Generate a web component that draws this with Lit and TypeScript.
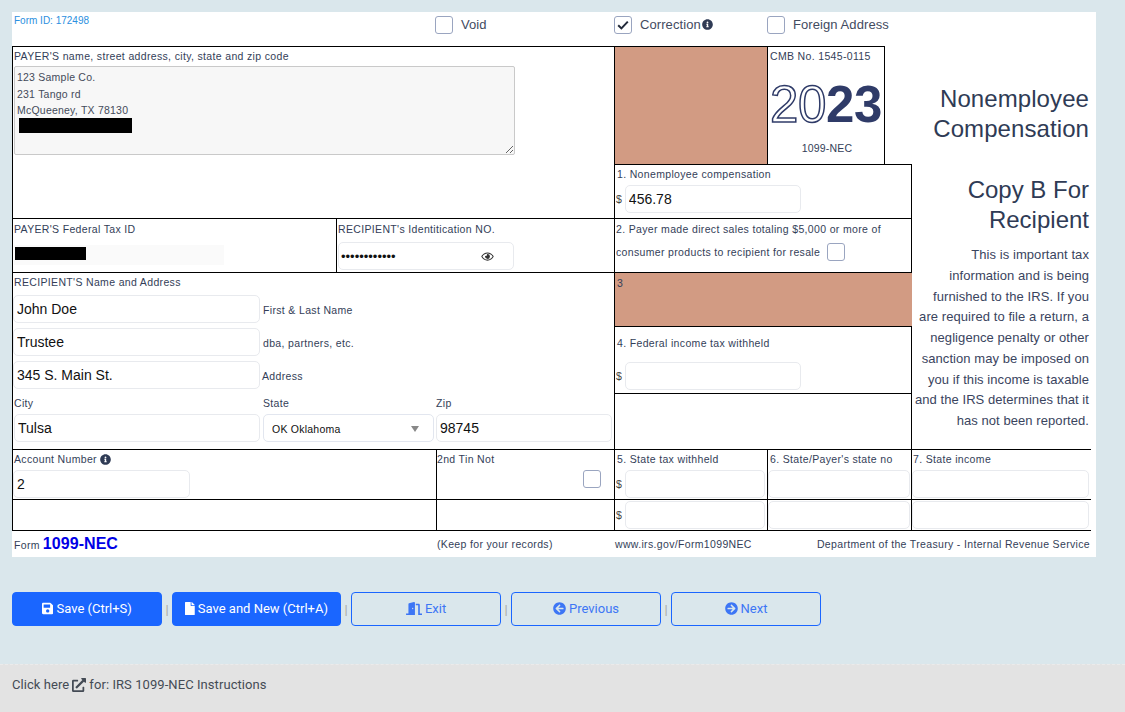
import { LitElement, html, css, svg } from "lit";
import { customElement } from "lit/decorators.js";

const icon = (cls: string, vb: string, d: string) =>
  html`<svg class="ic ${cls}" viewBox="${vb}" aria-hidden="true">${svg`<path fill="currentColor" d="${d}"></path>`}</svg>`;

const INFO = "M256 8C119.043 8 8 119.083 8 256c0 136.997 111.043 248 248 248s248-111.003 248-248C504 119.083 392.957 8 256 8zm0 110c23.196 0 42 18.804 42 42s-18.804 42-42 42-42-18.804-42-42 18.804-42 42-42zm56 254c0 6.627-5.373 12-12 12h-88c-6.627 0-12-5.373-12-12v-24c0-6.627 5.373-12 12-12h12v-64h-12c-6.627 0-12-5.373-12-12v-24c0-6.627 5.373-12 12-12h64c6.627 0 12 5.373 12 12v100h12c6.627 0 12 5.373 12 12v24z";
const SAVE = "M433.941 129.941l-83.882-83.882A48 48 0 0 0 316.118 32H48C21.49 32 0 53.49 0 80v352c0 26.51 21.49 48 48 48h352c26.51 0 48-21.49 48-48V163.882a48 48 0 0 0-14.059-33.941zM224 416c-35.346 0-64-28.654-64-64 0-35.346 28.654-64 64-64s64 28.654 64 64c0 35.346-28.654 64-64 64zm96-304.52V212c0 6.627-5.373 12-12 12H76c-6.627 0-12-5.373-12-12V108c0-6.627 5.373-12 12-12h228.52c3.183 0 6.235 1.264 8.485 3.515l3.48 3.48A11.996 11.996 0 0 1 320 111.48z";
const FILE = "M224 136V0H24C10.7 0 0 10.7 0 24v464c0 13.3 10.7 24 24 24h336c13.3 0 24-10.7 24-24V160H248c-13.2 0-24-10.8-24-24zm160-14.1v6.1H256V0h6.1c6.4 0 12.5 2.5 17 7l97.9 98c4.5 4.5 7 10.6 7 16.9z";
const DOOR = "M624 448h-80V113.45C544 86.19 522.47 64 496 64H384v64h96v384h144c8.84 0 16-7.16 16-16v-32c0-8.84-7.16-16-16-16zM312.24 1.01l-192 49.74C105.99 54.44 96 67.7 96 82.92V448H16c-8.84 0-16 7.16-16 16v32c0 8.84 7.16 16 16 16h336V33.18c0-21.58-19.56-37.41-39.76-32.17zM264 288c-13.25 0-24-14.33-24-32s10.75-32 24-32 24 14.33 24 32-10.75 32-24 32z";
const LEFT = "M256 504C119 504 8 393 8 256S119 8 256 8s248 111 248 248-111 248-248 248zm28.9-143.6L209.4 288H392c13.3 0 24-10.7 24-24v-16c0-13.3-10.7-24-24-24H209.4l75.5-72.4c9.7-9.3 9.9-24.8.4-34.3l-11-10.9c-9.4-9.4-24.6-9.4-33.9 0L107.7 239c-9.4 9.4-9.4 24.6 0 33.9l132.7 132.7c9.4 9.4 24.6 9.4 33.9 0l11-10.9c9.5-9.5 9.3-25-.4-34.3z";
const RIGHT = "M256 8c137 0 248 111 248 248S393 504 256 504 8 393 8 256 119 8 256 8zm-28.9 143.6l75.5 72.4H120c-13.3 0-24 10.7-24 24v16c0 13.3 10.7 24 24 24h182.6l-75.5 72.4c-9.7 9.3-9.9 24.8-.4 34.3l11 10.9c9.4 9.4 24.6 9.4 33.9 0L404.3 273c9.4-9.4 9.4-24.6 0-33.9L271.6 106.3c-9.4-9.4-24.6-9.4-33.9 0l-11 10.9c-9.5 9.6-9.3 25.1.4 34.4z";
const EXT = "M432,320H400a16,16,0,0,0-16,16V448H64V128H208a16,16,0,0,0,16-16V80a16,16,0,0,0-16-16H48A48,48,0,0,0,0,112V464a48,48,0,0,0,48,48H400a48,48,0,0,0,48-48V336A16,16,0,0,0,432,320ZM488,0h-128c-21.37,0-32.05,25.91-17,41l35.73,35.73L135,320.37a24,24,0,0,0,0,34L157.67,377a24,24,0,0,0,34,0L435.28,133.32,471,169c15,15,41,4.5,41-17V24A24,24,0,0,0,488,0Z";
const EYE = "M288 144a110.94 110.94 0 0 0-31.24 5 55.4 55.4 0 0 1 7.24 27 56 56 0 0 1-56 56 55.4 55.4 0 0 1-27-7.24A111.71 111.71 0 1 0 288 144zm284.52 97.4C518.29 135.59 410.93 64 288 64S57.68 135.64 3.48 241.41a32.35 32.35 0 0 0 0 29.19C57.71 376.41 165.07 448 288 448s230.32-71.64 284.52-177.41a32.35 32.35 0 0 0 0-29.19zM288 400c-98.65 0-189.09-55-237.93-144C98.91 167 189.34 112 288 112s189.09 55 237.93 144C477.1 345 386.66 400 288 400z";

@customElement("app-root")
export class AppRoot extends LitElement {
  static styles = css`
    :host { display: block; width: 1125px; height: 712px; background: #dae7ec; font-family: "Liberation Sans", Arial, sans-serif; color: #2f3b55; overflow: hidden; }
    * { box-sizing: border-box; }
    .page { display: flex; flex-direction: column; height: 712px; padding-top: 12px; }
    .card { margin-left: 12px; width: 1084px; height: 545px; background: #fff; display: flex; flex-direction: column; }

    .top { height: 34px; display: grid; grid-template-columns: 423px 179px 153px 1fr; position: relative; }
    .formid { font-size: 10px; color: #2b8fe0; padding: 3px 0 0 2px; }
    .chk-group { display: flex; align-items: flex-start; padding-top: 4px; }
    .chk-group span.t { font-size: 13px; letter-spacing: .08px; color: #434b5f; margin-left: 8px; line-height: 17px; display: flex; align-items: center; }
    .cb { width: 18px; height: 18px; border: 1px solid #9aa5c0; border-radius: 3px; background: #fff; display: flex; align-items: center; justify-content: center; flex: none; }
    .cb svg { width: 12px; height: 10px; }

    .grid { display: grid; width: 1078px;
      grid-template-columns: 324px 100px 178px 153px 117px 27px 180px;
      grid-template-rows: 118px 54px 54px 54px 67px 56px 50px 31px 1px; }
    .c { border-top: 1px solid #000; border-left: 1px solid #000; padding: 0 2px; font-size: 10.5px; line-height: 14px; color: #333e58; position: relative; min-width: 0; }
    .lab { display: block; font-size: 10.5px; line-height: 14px; letter-spacing: .34px; white-space: nowrap; }

    .payer { grid-column: 1 / 4; grid-row: 1 / 3; padding: 2px 0 0 1px; }
    .payer textarea { display: block; margin-top: 3px; width: 501px; height: 89px; background: #f7f7f7; border: 1px solid #c9c9c9; border-radius: 2px; padding: 2px 2px; font: 10.5px/16.5px "Liberation Sans", Arial, sans-serif; letter-spacing: .22px; color: #444b5a; outline: none; }
    .redact { position: absolute; background: #000; }
    .r1 { left: 6px; top: 71px; width: 113px; height: 15px; }

    .brown { background: #d29b83; }
    .b0 { grid-column: 4; grid-row: 1; }
    .omb { grid-column: 5 / 6; grid-row: 1; padding: 2px 0 0 2px; display: flex; flex-direction: column; width: 118px; border-right: 1px solid #000; }
    .year { font-size: 51px; line-height: 51px; height: 51px; margin-top: 16px; letter-spacing: -.4px; white-space: nowrap; color: #2f3b68; font-weight: 700; }
    .year .o { color: #fff; -webkit-text-stroke: 1.5px #2f3b68; font-weight: 400; }
    .omb .n { text-align: center; margin-top: 11px; letter-spacing: .2px; }

    .title { grid-column: 6 / 8; grid-row: 1; text-align: right; padding: 38px 2px 0 0; font-size: 24px; line-height: 30px; letter-spacing: .08px; color: #2f3b55; }
    .side { grid-column: 7; grid-row: 2 / 7; border-left: 1px solid #000; text-align: right; padding: 11px 1px 0 0; }
    .side .h { font-size: 24px; line-height: 30px; padding-right: 1px; color: #2f3b55; }
    .side p { margin: 10px 0 0; padding-right: 1px; font-size: 13px; line-height: 20.75px; letter-spacing: .07px; color: #3a445e; white-space: nowrap; }

    .b1 { grid-column: 4 / 7; grid-row: 2; padding: 2px 0 0 2px; width: 298px; }
    .tid { grid-column: 1; grid-row: 3; padding: 3px 0 0 1px; }
    .rid { grid-column: 2 / 4; grid-row: 3; padding: 3px 0 0 1px; }
    .b2 { grid-column: 4 / 7; grid-row: 3; padding: 3px 0 0 1px; width: 298px; }
    .b2 .l2 { display: flex; align-items: center; margin-top: 7px; height: 18px; gap: 7px; }
    .b3 { grid-column: 4 / 7; grid-row: 4; padding: 3px 0 0 2px; width: 298px; }
    .b4 { grid-column: 4 / 7; grid-row: 5; padding: 9px 0 0 2px; width: 298px; }
    .b4x { grid-column: 4 / 7; grid-row: 6; width: 298px; }
    .rec { grid-column: 1 / 4; grid-row: 4 / 7; padding: 2px 0 0 0; }
    .rec > .lab { margin-left: 1px; }

    .inp { display: block; height: 28px; border: 1px solid #e8eaee; border-radius: 5px; background: #fff; font: 14px "Liberation Sans", Arial, sans-serif; color: #111; padding: 0 3px; outline: none; min-width: 0; }
    .money { display: flex; align-items: center; gap: 3px; margin-left: -1px; font-size: 10.5px; color: #444; }
    .money .inp { flex: none; }
    .w176 { width: 176px; }
    .mt12 { margin-top: 12px; }
    .taxbox { width: 210px; height: 20px; background: #fafafa; margin-top: 9px; margin-left: 0; position: relative; }
    .r2 { left: 1px; top: 2px; width: 71px; height: 13px; }
    .pw { position: relative; width: 176px; margin-top: 6px; }
    .pw .inp { width: 176px; padding-left: 2px; font-size: 13px; letter-spacing: 0; }
    .pw .ic { position: absolute; left: 143px; top: 9px; width: 13px; height: 11px; color: #333; }

    .rows { display: flex; flex-direction: column; gap: 5px; margin-top: 6px; }
    .row { display: flex; align-items: center; gap: 3px; }
    .row .inp { width: 247px; }
    .row .lab { padding-top: 2px; }
    .row .lab.tight { margin-left: -1px; }
    .city { display: grid; grid-template-columns: 249px 173px 176px; gap: 4px 0; margin-top: 7px; margin-left: 1px; }
    .city .lab { line-height: 14px; }
    .city .inp { width: 100%; }
    .city .inp.cw { width: 246px; }
    .sel { position: relative; width: 171px; }
    .sel select { width: 100%; height: 28px; appearance: none; -webkit-appearance: none; border: 1px solid #e2e6ef; border-radius: 5px; background: #fff; font: 10.5px "Liberation Sans", Arial, sans-serif; letter-spacing: .24px; color: #111; padding: 2px 0 0 8px; outline: none; }
    .sel i { position: absolute; left: 148px; top: 12px; width: 0; height: 0; border-left: 4.5px solid transparent; border-right: 4.5px solid transparent; border-top: 6px solid #888; }

    .c7s { grid-column: 1 / 3; grid-row: 7; padding: 2px 0 0 0; }
    .c7s .lab { margin-left: 1px; }
    .tin { grid-column: 3; grid-row: 7; padding: 2px 0 0 0; position: relative; }
    .tin .cb { position: absolute; left: 146px; top: 20px; }
    .s5 { grid-column: 4; grid-row: 7; padding: 2px 0 0 2px; }
    .s6 { grid-column: 5 / 7; grid-row: 7; padding: 2px 0 0 0; }
    .s6 .lab { margin-left: 2px; }
    .s7 { grid-column: 7; grid-row: 7; padding: 2px 0 0 0; }
    .s7 .lab { margin-left: 1px; }
    .t1 { grid-column: 1 / 3; grid-row: 8; }
    .t2 { grid-column: 3; grid-row: 8; }
    .t3 { grid-column: 4; grid-row: 8; padding: 1px 0 0 2px; }
    .t4 { grid-column: 5 / 7; grid-row: 8; padding: 1px 0 0 0; }
    .t5 { grid-column: 7; grid-row: 8; padding: 1px 0 0 0; }
    .cellrow { margin-top: 4px; }
    .s5 .inp, .t3 .inp { width: 140px; }
    .s6 .inp, .t4 .inp { width: 142px; }
    .s7 .inp, .t5 .inp { width: 177px; }
    .acct { width: 177px; margin-top: 4px; }
    .line { grid-column: 1 / 8; grid-row: 9; background: #000; height: 1px; }

    .foot { display: grid; width: 1078px; grid-template-columns: 423px 178px 1fr auto; align-items: center; height: 26px; font-size: 10.5px; letter-spacing: .34px; color: #333e58; padding-left: 2px; }
    .foot .fn { display: flex; align-items: baseline; gap: 3px; }
    .foot b { font-size: 16px; color: #0000e6; letter-spacing: .05px; }

    .btns { display: flex; align-items: center; margin: 35px 0 0 12px; }
    .btn { height: 34px; border: 1px solid #1a66ff; border-radius: 4px; display: flex; align-items: center; justify-content: center; gap: 3px; font: 13px Roboto, sans-serif; color: #3d76f5; background: transparent; padding: 0 0 2px; width: 150px; }
    .btn.p { background: #1a66ff; color: #fff; }
    .btn.w169 { width: 169px; }
    .btn .ic { height: 13px; color: inherit; margin-top: 1px; }
    .sep { width: 10px; text-align: center; font: 13px Roboto, sans-serif; color: #a8a8a0; }

    .bar { margin-top: auto; height: 48px; background: #e3e3e3; border-top: 1px dashed #ebebeb; display: flex; align-items: center; padding: 0 0 8px 12px; font: 13px Roboto, sans-serif; letter-spacing: .07px; color: #444b55; gap: 3px; }
    .bar .ic { height: 14px; color: #444b55; }
    .ii { width: 11px; height: 11px; color: #2f3b55; margin-left: 1px; }
    .lab .ii { margin-left: 3px; vertical-align: -1.5px; }
  `;

  render() {
    const check = html`<svg viewBox="0 0 12 10" aria-hidden="true"><path d="M1.2 5.2 4.4 8.4 10.8 1.6" fill="none" stroke="#222a3a" stroke-width="2"></path></svg>`;
    return html`<div class="page">
      <div class="card">
        <div class="top">
          <div class="formid">Form ID: 172498</div>
          <div class="chk-group"><div class="cb"></div><span class="t">Void</span></div>
          <div class="chk-group"><div class="cb">${check}</div><span class="t">Correction${icon("ii", "0 0 512 512", INFO)}</span></div>
          <div class="chk-group"><div class="cb"></div><span class="t">Foreign Address</span></div>
        </div>
        <div class="grid">
          <div class="c payer">
            <span class="lab">PAYER'S name, street address, city, state and zip code</span>
            <textarea readonly>123 Sample Co.
231 Tango rd
McQueeney, TX 78130</textarea>
            <div class="redact r1"></div>
          </div>
          <div class="c brown b0"></div>
          <div class="c omb">
            <span class="lab">CMB No. 1545-0115</span>
            <div class="year"><span class="o">20</span>23</div>
            <div class="n">1099-NEC</div>
          </div>
          <div class="title">Nonemployee Compensation</div>
          <div class="side">
            <div class="h">Copy B For<br />Recipient</div>
            <p>This is important tax<br />information and is being<br />furnished to the IRS. If you<br />are required to file a return, a<br />negligence penalty or other<br />sanction may be imposed on<br />you if this income is taxable<br />and the IRS determines that it<br />has not been reported.</p>
          </div>

          <div class="c b1">
            <span class="lab">1. Nonemployee compensation</span>
            <div class="money cellrow"><span>$</span><input class="inp w176" .value=${"456.78"} readonly /></div>
          </div>

          <div class="c tid">
            <span class="lab">PAYER'S Federal Tax ID</span>
            <div class="taxbox"><div class="redact r2"></div></div>
          </div>
          <div class="c rid">
            <span class="lab">RECIPIENT's Identitication NO.</span>
            <div class="pw"><input class="inp" type="password" .value=${"123456789012"} readonly />${icon("", "0 0 576 512", EYE)}</div>
          </div>
          <div class="c b2">
            <span class="lab">2. Payer made direct sales totaling $5,000 or more of</span>
            <div class="l2"><span class="lab">consumer products to recipient for resale</span><div class="cb"></div></div>
          </div>

          <div class="c brown b3"><span class="lab">3</span></div>
          <div class="c rec">
            <span class="lab">RECIPIENT'S Name and Address</span>
            <div class="rows">
              <div class="row"><input class="inp" .value=${"John Doe"} readonly /><span class="lab">First &amp; Last Name</span></div>
              <div class="row"><input class="inp" .value=${"Trustee"} readonly /><span class="lab">dba, partners, etc.</span></div>
              <div class="row"><input class="inp" .value=${"345 S. Main St."} readonly /><span class="lab tight">Address</span></div>
            </div>
            <div class="city">
              <span class="lab">City</span><span class="lab">State</span><span class="lab">Zip</span>
              <input class="inp cw" .value=${"Tulsa"} readonly />
              <div class="sel"><select><option>OK Oklahoma</option></select><i></i></div>
              <input class="inp" .value=${"98745"} readonly />
            </div>
          </div>

          <div class="c b4">
            <span class="lab">4. Federal income tax withheld</span>
            <div class="money mt12"><span>$</span><input class="inp w176" readonly /></div>
          </div>
          <div class="c b4x"></div>

          <div class="c c7s">
            <span class="lab">Account Number${icon("ii", "0 0 512 512", INFO)}</span>
            <input class="inp acct" .value=${"2"} readonly />
          </div>
          <div class="c tin"><span class="lab">2nd Tin Not</span><div class="cb"></div></div>
          <div class="c s5"><span class="lab">5. State tax withheld</span><div class="money cellrow"><span>$</span><input class="inp" readonly /></div></div>
          <div class="c s6"><span class="lab">6. State/Payer's state no</span><div class="cellrow"><input class="inp" readonly /></div></div>
          <div class="c s7"><span class="lab">7. State income</span><div class="cellrow"><input class="inp" readonly /></div></div>

          <div class="c t1"></div>
          <div class="c t2"></div>
          <div class="c t3"><div class="money"><span>$</span><input class="inp" readonly /></div></div>
          <div class="c t4"><input class="inp" readonly /></div>
          <div class="c t5"><input class="inp" readonly /></div>
          <div class="line"></div>
        </div>
        <div class="foot">
          <div class="fn"><span>Form</span><b>1099-NEC</b></div>
          <div>(Keep for your records)</div>
          <div>www.irs.gov/Form1099NEC</div>
          <div>Department of the Treasury - Internal Revenue Service</div>
        </div>
      </div>

      <div class="btns">
        <button class="btn p">${icon("", "0 0 448 512", SAVE)}Save (Ctrl+S)</button>
        <span class="sep">|</span>
        <button class="btn p w169">${icon("", "0 0 384 512", FILE)}Save and New (Ctrl+A)</button>
        <span class="sep">|</span>
        <button class="btn">${icon("", "0 0 640 512", DOOR)}Exit</button>
        <span class="sep">|</span>
        <button class="btn">${icon("", "0 0 512 512", LEFT)}Previous</button>
        <span class="sep">|</span>
        <button class="btn">${icon("", "0 0 512 512", RIGHT)}Next</button>
      </div>

      <div class="bar">Click here ${icon("", "0 0 512 512", EXT)} for: IRS 1099-NEC Instructions</div>
    </div>`;
  }
}
